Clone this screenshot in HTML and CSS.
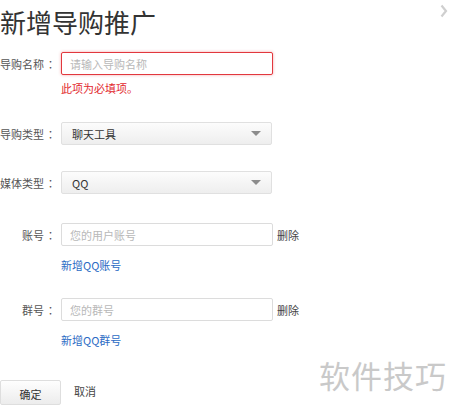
FILE: index.html
```html
<!DOCTYPE html>
<html lang="zh">
<head>
<meta charset="utf-8">
<link rel="stylesheet" href="styles.css">
</head>
<body>
<div class="dialog">
  <h1 class="title">新增导购推广</h1>
  <svg class="close" width="8" height="14" viewBox="0 0 8 14" aria-label="关闭">
    <polyline points="1.5,1.5 6,7 1.5,12.5" fill="none" stroke="#cfcfcf" stroke-width="2.2"/>
  </svg>

  <div class="row row-name">
    <label class="label">导购名称<span class="colon">：</span></label>
    <div class="input input-error"><span class="ph">请输入导购名称</span></div>
  </div>
  <div class="error">此项为必填项。</div>

  <div class="row row-type">
    <label class="label">导购类型<span class="colon">：</span></label>
    <div class="select"><span class="val">聊天工具</span><span class="caret"></span></div>
  </div>

  <div class="row row-media">
    <label class="label">媒体类型<span class="colon">：</span></label>
    <div class="select"><span class="val">QQ</span><span class="caret"></span></div>
  </div>

  <div class="row row-account">
    <label class="label">账号<span class="colon">：</span></label>
    <div class="input"><span class="ph">您的用户账号</span></div>
    <span class="del">删除</span>
  </div>
  <div class="link link-account">新增QQ账号</div>

  <div class="row row-group">
    <label class="label">群号<span class="colon">：</span></label>
    <div class="input"><span class="ph">您的群号</span></div>
    <span class="del">删除</span>
  </div>
  <div class="link link-group">新增QQ群号</div>

  <div class="actions">
    <button class="btn">确定</button>
    <span class="cancel">取消</span>
  </div>

  <div class="watermark">软件技巧</div>
</div>
</body>
</html>
```

FILE: styles.css
```css
* { box-sizing: border-box; }
html, body {
  margin: 0;
  padding: 0;
  background: #fff;
}
body {
  font-family: "Noto Sans CJK SC", "Noto Sans", sans-serif;
  font-size: 11px;
  color: #555;
  width: 450px;
  height: 409px;
  overflow: hidden;
}
.dialog {
  position: relative;
  height: 409px;
}
.title {
  margin: 0;
  padding-top: 5px;
  height: 40px;
  font-size: 26px;
  line-height: 34px;
  font-weight: normal;
  color: #333;
  white-space: nowrap;
}
.close {
  position: absolute;
  left: 440px;
  top: 4px;
}
.row {
  display: flex;
  align-items: center;
  height: 23px;
}
.label {
  width: 57px;
  flex: none;
  display: flex;
  justify-content: flex-end;
  white-space: nowrap;
  margin-right: 4px;
  color: #555;
}
.colon {
  font-family: "Noto Sans CJK TC", sans-serif;
  display: inline-block;
  width: 13px;
  text-align: center;
}
.input {
  width: 212px;
  height: 23px;
  border: 1px solid #dcdcdc;
  border-radius: 2px;
  padding-left: 8px;
  display: flex;
  align-items: center;
  background: #fff;
}
.input-error {
  border-color: #e2383e;
  box-shadow: 0 0 3px rgba(226, 56, 62, 0.45);
}
.ph { color: #b8b8b8; }
.row-name { margin-top: 12px; }
.error {
  margin-top: 5px;
  padding-left: 61px;
  line-height: 16px;
  color: #e2282e;
}
.select {
  width: 211px;
  height: 23px;
  border: 1px solid #e0e0e0;
  border-radius: 2px;
  background: linear-gradient(#fcfcfc, #eeeeee);
  padding: 0 10px 0 10px;
  display: flex;
  align-items: center;
  justify-content: space-between;
}
.val { color: #333; }
.caret {
  width: 0;
  height: 0;
  border-left: 5px solid transparent;
  border-right: 5px solid transparent;
  border-top: 5px solid #8c8c8c;
}
.row-type { margin-top: 26px; }
.row-media { margin-top: 26px; }
.row-account { margin-top: 29px; }
.row-group { margin-top: 25px; }
.del {
  margin-left: 4px;
  color: #444;
}
.link {
  padding-left: 61px;
  line-height: 16px;
  color: #2b6bc4;
}
.link-account { margin-top: 11px; }
.link-group { margin-top: 11px; }
.actions {
  margin-top: 32px;
  display: flex;
  align-items: center;
}
.btn {
  width: 61px;
  height: 25px;
  border: 1px solid #dedede;
  border-radius: 2px;
  background: linear-gradient(#fefefe, #ececec);
  font-family: inherit;
  font-size: 11px;
  color: #333;
  padding: 0;
  padding-top: 2px;
}
.cancel {
  margin-left: 13px;
  margin-top: -3px;
  color: #444;
}
.watermark {
  position: absolute;
  left: 319px;
  top: 355px;
  font-size: 31px;
  line-height: 40px;
  color: #c9c9c9;
  letter-spacing: 1px;
  white-space: nowrap;
}
```
